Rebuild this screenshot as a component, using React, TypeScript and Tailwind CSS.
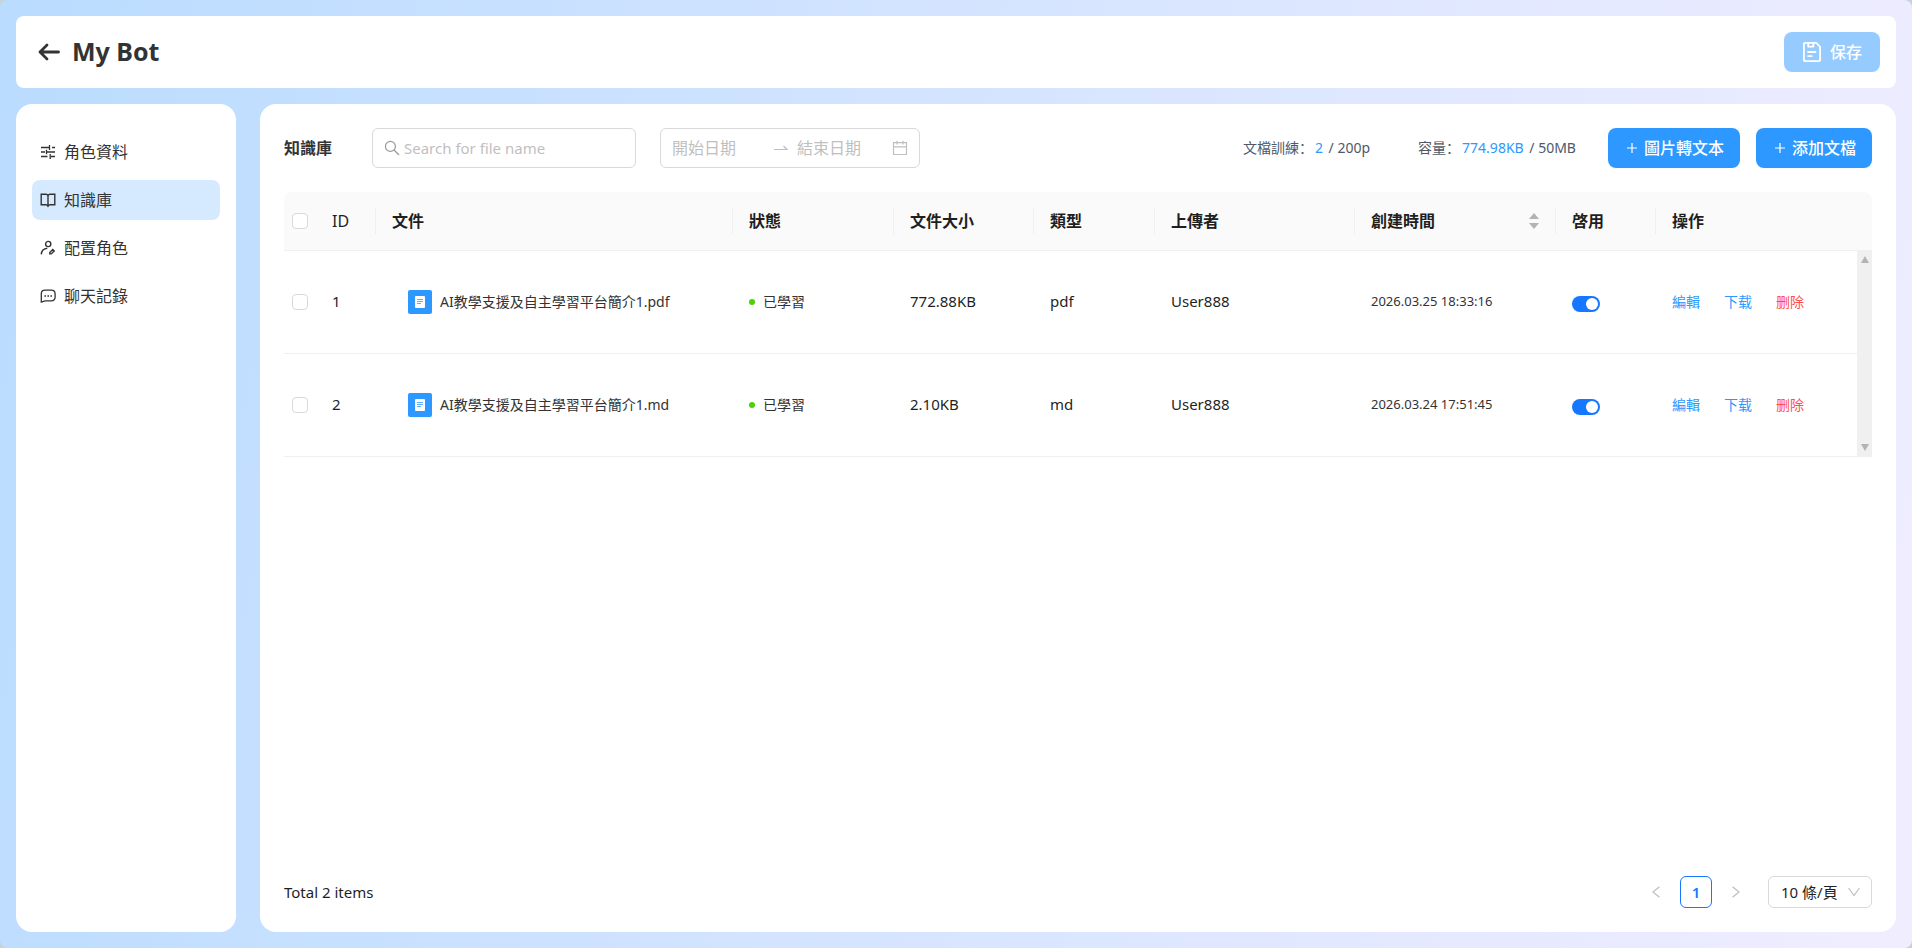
import React, { useState } from 'react';

const BookIcon = () => (
    <svg width="16" height="16" viewBox="0 0 16 16" fill="none" stroke="currentColor" strokeWidth="1.4">
        <path d="M8 3.6C7.6 2.7 7 2.3 6 2.3H1.2v10.4H6c1 0 1.6.3 2 1.2.4-.9 1-1.2 2-1.2h4.8V2.3H10c-1 0-1.6.4-2 1.3zM8 3.6V15" />
    </svg>
);

const SlidersIcon = () => (
    <svg width="16" height="16" viewBox="0 0 16 16" fill="none" stroke="currentColor" strokeWidth="1.3">
        <path d="M1 3.5h8M12 3.5h3M9.5 1v5M1 8h4M7 8h8M6.5 5.8v4.4M1 12.5h6.5M11 12.5h4M10.2 10v5" />
    </svg>
);

const UserEditIcon = () => (
    <svg width="16" height="16" viewBox="0 0 16 16" fill="none" stroke="currentColor" strokeWidth="1.4">
        <circle cx="8.2" cy="4" r="2.6" />
        <path d="M1.3 14.4c.2-3.6 2.4-5.9 6-6.2" />
        <path d="M9.8 12.4l3-2.9 1.4 1.4-2.9 3H9.8z" />
    </svg>
);

const ChatIcon = () => (
    <svg width="16" height="16" viewBox="0 0 16 16" fill="none" stroke="currentColor" strokeWidth="1.3">
        <path d="M5 2.2h6.2c2.4 0 3.9 1.4 3.9 3.8v3c0 2.4-1.5 3.8-3.9 3.8H5.2L1.3 14.2V6c0-2.4 1.3-3.8 3.7-3.8z" />
        <path d="M4.4 8H6M7.4 8H9M10.4 8H12" strokeWidth="1.6" />
    </svg>
);

const SaveIcon = () => (
    <svg width="20" height="22" viewBox="0 0 20 22" fill="none" stroke="currentColor" strokeWidth="1.8" strokeLinejoin="round">
        <path d="M2.9 1.9h11.3l3.9 3.9v13.3a1 1 0 0 1-1 1H2.9a1 1 0 0 1-1-1V2.9a1 1 0 0 1 1-1zM6.2 1.9v3.7h5.2V1.9M5.4 11h8.8M5.4 15.2h5" />
    </svg>
);

const SearchIcon = () => (
    <svg width="16" height="16" viewBox="0 0 16 16" fill="none" stroke="currentColor" strokeWidth="1.2">
        <circle cx="6.4" cy="6.4" r="5" />
        <path d="M10 10l5 5" />
    </svg>
);

const CalendarIcon = () => (
    <svg width="16" height="16" viewBox="0 0 16 16" fill="none" stroke="currentColor" strokeWidth="1.2">
        <path d="M1.5 2.7h13v11.8h-13zM1.5 6.8h13M5 .8v3.6M11 .8v3.6" />
    </svg>
);

const PlusIcon = () => (
    <svg width="16" height="16" viewBox="0 0 16 16" fill="none" stroke="currentColor" strokeWidth="1.2">
        <path d="M8 3v10M3 8h10" />
    </svg>
);

const FileIcon = () => (
    <span className="flex h-6 w-6 shrink-0 items-center justify-center rounded-xs bg-[#2d98ff]">
        <svg width="10" height="12" viewBox="0 0 10 12">
            <rect width="10" height="12" rx="1" fill="#fff" />
            <path d="M2 3.5h6M2 5.5h6M2 7.5h4" stroke="#2d98ff" strokeWidth="0.8" />
        </svg>
    </span>
);

const menu = [
    { label: '角色資料', icon: SlidersIcon },
    { label: '知識庫', icon: BookIcon },
    { label: '配置角色', icon: UserEditIcon },
    { label: '聊天記錄', icon: ChatIcon },
];

const files = [
    { id: 1, name: 'AI教學支援及自主學習平台簡介1.pdf', size: '772.88KB', type: 'pdf', user: 'User888', time: '2026.03.25 18:33:16' },
    { id: 2, name: 'AI教學支援及自主學習平台簡介1.md', size: '2.10KB', type: 'md', user: 'User888', time: '2026.03.24 17:51:45' },
];

const headers = ['文件', '狀態', '文件大小', '類型', '上傳者', '創建時間', '啓用', '操作'];

const checkboxClass = 'block h-4 w-4 appearance-none rounded-sm border border-[#d9d9d9] bg-white checked:border-[#1677ff] checked:bg-[#1677ff]';

const Columns = () => (
    <colgroup>
        <col className="w-8" />
        <col className="w-[60px]" />
        <col className="w-[357px]" />
        <col className="w-[161px]" />
        <col className="w-[140px]" />
        <col className="w-[121px]" />
        <col className="w-[200px]" />
        <col className="w-[201px]" />
        <col className="w-[100px]" />
        <col />
    </colgroup>
);

const Sidebar = () => (
    <aside className="w-[220px] shrink-0 rounded-2xl bg-white px-4 py-7">
        <nav className="flex flex-col gap-2">
            {menu.map(({ label, icon: Icon }) => (
                <a
                    key={label}
                    href="#"
                    className={`flex h-10 items-center gap-2 rounded-lg px-2 text-base text-[#333] ${label === '知識庫' ? 'bg-[#d6eaff]' : ''}`}
                >
                    <Icon />
                    {label}
                </a>
            ))}
        </nav>
    </aside>
);

const Toolbar = () => (
    <div className="flex h-10 items-center">
        <h2 className="w-[88px] text-base font-bold text-[#333]">知識庫</h2>
        <label className="flex h-10 w-[264px] items-center gap-1 rounded-md border border-[#d9d9d9] px-[11px] text-[#999]">
            <SearchIcon />
            <input
                type="text"
                aria-label="Search for file name"
                placeholder="Search for file name"
                className="min-w-0 flex-1 text-[15px] text-[#333] outline-none placeholder:text-[#bfbfbf]"
            />
        </label>
        <div className="ml-6 flex h-10 w-[260px] items-center rounded-md border border-[#d9d9d9] px-[11px] text-[#bfbfbf]">
            <input aria-label="開始日期" placeholder="開始日期" className="w-[93px] text-base outline-none placeholder:text-[#bfbfbf]" />
            <svg className="mx-2 shrink-0" width="16" height="16" viewBox="0 0 16 16" fill="none" stroke="currentColor" strokeWidth="1.2">
                <path d="M1 9.5h13L10.5 6" />
            </svg>
            <input aria-label="結束日期" placeholder="結束日期" className="min-w-0 flex-1 text-base outline-none placeholder:text-[#bfbfbf]" />
            <CalendarIcon />
        </div>
        <div className="ml-auto flex items-center text-sm text-[#4e5969]">
            <span>文檔訓練：<span className="mx-0.5 text-[#2d98ff]">2</span> / 200p</span>
            <span className="ml-12">容量：<span className="mx-0.5 text-[#2d98ff]">774.98KB</span> / 50MB</span>
            <button className="ml-8 flex h-10 items-center gap-1 rounded-lg bg-[#2d98ff] px-4 text-base font-medium text-white">
                <PlusIcon />
                圖片轉文本
            </button>
            <button className="ml-4 flex h-10 items-center gap-1 rounded-lg bg-[#2d98ff] px-4 text-base font-medium text-white">
                <PlusIcon />
                添加文檔
            </button>
        </div>
    </div>
);

const FileTable = () => {
    const [enabled, setEnabled] = useState<Record<number, boolean>>({ 1: true, 2: true });

    return (
        <div className="relative mt-6">
            <table className="w-full table-fixed text-left text-[15px] text-[#1f1f1f]">
                <Columns />
                <thead>
                    <tr className="h-[58px] border-b border-[#f0f0f0] bg-[#fafafa]">
                        <th className="rounded-tl-lg pl-2">
                            <input type="checkbox" aria-label="Select all" className={checkboxClass} />
                        </th>
                        <th className="p-0 text-base font-normal">
                            <div className="flex h-[26px] items-center border-r border-[#f0f0f0] pl-4">ID</div>
                        </th>
                        {headers.map((title, i) => (
                            <th key={title} className="p-0 text-base font-bold last:rounded-tr-lg">
                                <div className={`flex h-[26px] items-center justify-between border-[#f0f0f0] px-4 ${i < headers.length - 1 ? 'border-r' : ''}`}>
                                    {title}
                                    {title === '創建時間' && (
                                        <button aria-label="Sort" className="text-[#b3b3b3]">
                                            <svg width="10" height="16" viewBox="0 0 10 16" fill="currentColor">
                                                <path d="M5 0l5 6H0zM5 16l5-6H0z" />
                                            </svg>
                                        </button>
                                    )}
                                </div>
                            </th>
                        ))}
                    </tr>
                </thead>
                <tbody>
                    {files.map((file) => (
                        <tr key={file.id} className="h-[103px] border-b border-[#f0f0f0]">
                            <td className="pl-2">
                                <input type="checkbox" aria-label={`Select ${file.name}`} className={checkboxClass} />
                            </td>
                            <td className="pl-4">{file.id}</td>
                            <td className="pl-8 text-sm text-[#333]">
                                <div className="flex items-center gap-2">
                                    <FileIcon />
                                    {file.name}
                                </div>
                            </td>
                            <td className="pl-4 text-sm text-[#333]">
                                <div className="flex items-center gap-2">
                                    <span className="h-1.5 w-1.5 rounded-full bg-[#4cd300]" />
                                    已學習
                                </div>
                            </td>
                            <td className="pl-4">{file.size}</td>
                            <td className="pl-4">{file.type}</td>
                            <td className="pl-4">{file.user}</td>
                            <td className="pl-4 text-[13px] text-[#333]">{file.time}</td>
                            <td className="pl-4">
                                <button
                                    role="switch"
                                    aria-checked={enabled[file.id]}
                                    aria-label={`Enable ${file.name}`}
                                    onClick={() => setEnabled({ ...enabled, [file.id]: !enabled[file.id] })}
                                    className={`mt-1 flex h-4 w-7 items-center rounded-full px-0.5 ${enabled[file.id] ? 'justify-end bg-[#1677ff]' : 'bg-[#bfbfbf]'}`}
                                >
                                    <span className="h-3 w-3 rounded-full bg-white" />
                                </button>
                            </td>
                            <td className="pl-4 text-sm">
                                <div className="flex gap-6 text-[#2d98ff]">
                                    <button>編輯</button>
                                    <button>下载</button>
                                    <button className="text-[#ff4d4f]">删除</button>
                                </div>
                            </td>
                        </tr>
                    ))}
                </tbody>
            </table>

            {/* Scrollbar track over the right edge of the rows */}
            <div className="absolute top-[58px] right-0 bottom-0 flex w-[15px] flex-col items-center justify-between bg-[#f0f0f0] py-1.5 text-[#b3b3b3]">
                <svg width="8" height="7" viewBox="0 0 8 7" fill="currentColor"><path d="M4 0l4 7H0z" /></svg>
                <svg width="8" height="7" viewBox="0 0 8 7" fill="currentColor"><path d="M4 7l4-7H0z" /></svg>
            </div>
        </div>
    );
};

const Pagination = () => (
    <footer className="mt-auto flex h-8 items-center text-[15px] text-[#1f1f1f]">
        <span>Total 2 items</span>
        <div className="ml-auto flex items-center gap-2">
            <button aria-label="Previous page" className="flex h-8 w-8 items-center justify-center text-[#bfbfbf]">
                <svg width="8" height="12" viewBox="0 0 8 12" fill="none" stroke="currentColor" strokeWidth="1.2"><path d="M7.5.8L1 6l6.5 5.2" /></svg>
            </button>
            <button className="h-8 w-8 rounded-md border border-[#1677ff] font-semibold text-[#1677ff]">1</button>
            <button aria-label="Next page" className="flex h-8 w-8 items-center justify-center text-[#bfbfbf]">
                <svg width="8" height="12" viewBox="0 0 8 12" fill="none" stroke="currentColor" strokeWidth="1.2"><path d="M.5.8L7 6 .5 11.2" /></svg>
            </button>
            <label className="relative ml-2 flex items-center">
                <select aria-label="Page size" className="h-8 w-[104px] appearance-none rounded-md border border-[#d9d9d9] bg-white pl-3 text-[15px]">
                    <option>10 條/頁</option>
                </select>
                <svg className="pointer-events-none absolute right-3 text-[#bfbfbf]" width="12" height="10" viewBox="0 0 12 10" fill="none" stroke="currentColor" strokeWidth="1.2">
                    <path d="M.5 1L6 8.5 11.5 1" />
                </svg>
            </label>
        </div>
    </footer>
);

export default function App() {
    return (
        <div className="bg-[#c3d4dc] font-['Noto_Sans','Noto_Sans_CJK_SC',sans-serif]">
            <div className="flex min-h-screen flex-col gap-4 rounded-lg bg-linear-[100deg,#badcff,#f1edff] p-4">
                <header className="flex h-[72px] items-center rounded-lg bg-white px-4">
                    <button aria-label="Back" className="flex h-8 w-10 items-center pl-1.5 text-[#333]">
                        <svg width="22" height="18" viewBox="0 0 22 18" fill="none" stroke="currentColor" strokeWidth="2.8" strokeLinecap="round" strokeLinejoin="round">
                            <path d="M20.5 9H2M9 2L2 9l7 7" />
                        </svg>
                    </button>
                    <h1 className="text-[25px] font-bold text-[#333]">My Bot</h1>
                    <button disabled className="ml-auto flex h-10 w-24 items-center justify-center gap-2 rounded-lg bg-[#96cbff] text-base font-medium text-white">
                        <SaveIcon />
                        保存
                    </button>
                </header>
                <div className="flex flex-1 gap-6">
                    <Sidebar />
                    <main className="flex min-w-0 flex-1 flex-col rounded-2xl bg-white p-6">
                        <Toolbar />
                        <FileTable />
                        <Pagination />
                    </main>
                </div>
            </div>
        </div>
    );
}
